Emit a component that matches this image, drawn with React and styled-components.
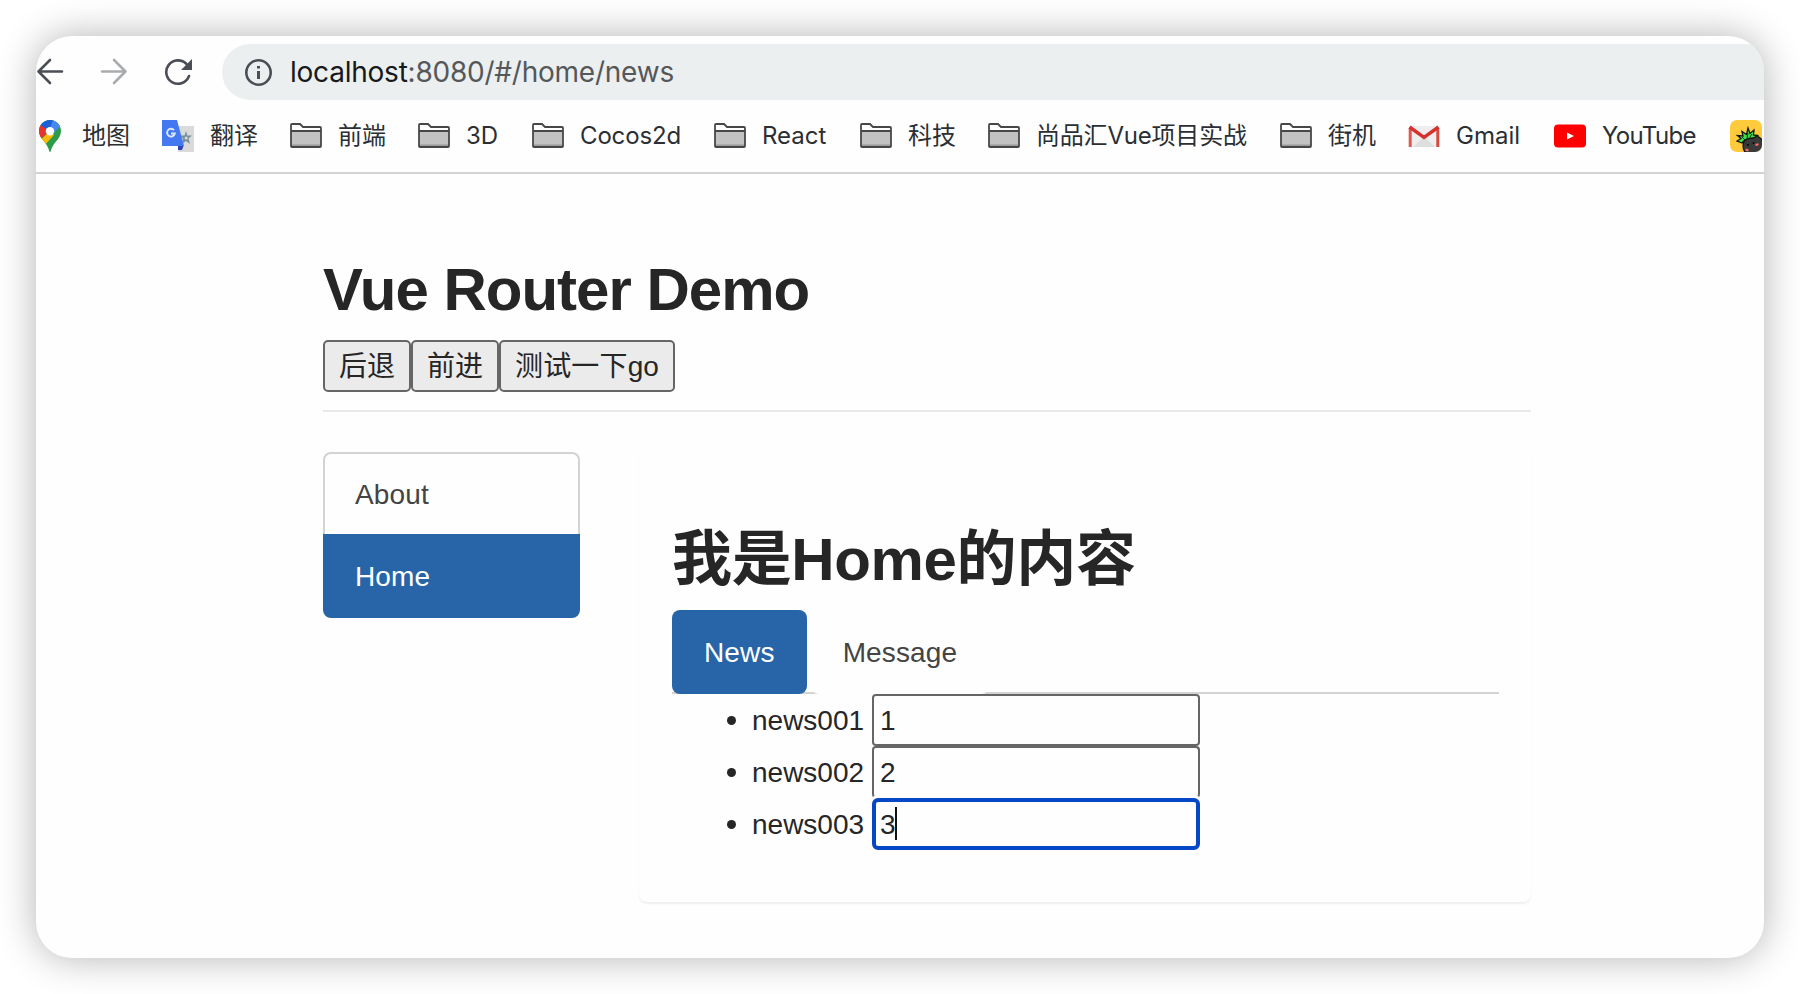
import React from "react";
import styled, { createGlobalStyle, css } from "styled-components";

const GlobalStyle = createGlobalStyle`
  *, *::before, *::after { box-sizing: border-box; }
  body {
    margin: 0;
    background: #fff;
    font-family: "Liberation Sans", "Noto Sans CJK SC", sans-serif;
    color: #262626;
  }
  h1, h2, ul { margin: 0; padding: 0; }
  ul { list-style: none; }
`;

const Stage = styled.div`
  width: 1800px;
  height: 994px;
  padding: 36px;
  overflow: hidden;
`;

const Window = styled.div`
  width: 1728px;
  height: 922px;
  border-radius: 36px;
  background: #fefefe;
  box-shadow: 0 0 38px rgba(0, 0, 0, 0.3);
`;

const Clip = styled.div`
  height: 100%;
  border-radius: inherit;
  overflow: hidden;
`;

const Toolbar = styled.div`
  display: flex;
  align-items: center;
  gap: 36px;
  height: 64px;
  padding-top: 8px;
`;

const NavIcon = styled.svg`
  flex: none;
  width: 28px;
  height: 28px;
  fill: none;
  stroke: ${(p) => (p.$muted ? "#a9acaf" : "#4b4e54")};
  stroke-width: 2.6;
  stroke-linecap: round;
  stroke-linejoin: round;
`;

const AddressBar = styled.div`
  flex: 1;
  display: flex;
  align-items: center;
  gap: 18px;
  height: 56px;
  margin-left: -6px;
  padding-left: 22px;
  border-radius: 28px 0 0 28px;
  background: #ebeff0;
`;

const Url = styled.span`
  font: 400 28px/56px Inter, sans-serif;
  letter-spacing: -0.23px;
  color: #555759;
  white-space: nowrap;
`;

const Host = styled.span`
  color: #17191b;
`;

const BookmarkBar = styled.div`
  display: flex;
  align-items: center;
  gap: 32px;
  height: 74px;
  margin-left: -2px;
  border-bottom: 2px solid #d3d3d3;
`;

const Bookmark = styled.div`
  flex: none;
  display: flex;
  align-items: center;
  gap: 16px;
`;

const BookmarkIcon = styled.svg`
  flex: none;
  display: block;
  width: 32px;
  height: 32px;
`;

const BookmarkLabel = styled.span`
  width: ${(p) => p.$width}px;
  font: 400 24px/32px Inter, "Noto Sans CJK SC", sans-serif;
  letter-spacing: ${(p) => p.$spacing || 0}px;
  color: #2b2f33;
  white-space: nowrap;
`;

const Page = styled.main`
  width: 1208px;
  margin-left: 287px;
  padding-top: 83px;
`;

const Title = styled.h2`
  font-weight: 700;
  font-size: 60px;
  line-height: 66px;
  letter-spacing: ${(p) => p.$spacing}px;
  white-space: nowrap;
`;

const Actions = styled.div`
  display: flex;
  margin-top: 17px;
  padding-bottom: 18px;
  border-bottom: 2px solid #e9e9e9;
`;

const ActionButton = styled.button`
  height: 52px;
  padding: 2px 14px 0;
  border: 2px solid #666;
  border-radius: 5px;
  background: #ebebeb;
  color: inherit;
  font: 28px/46px "Liberation Sans", "Noto Sans CJK SC", sans-serif;
  letter-spacing: ${(p) => p.$spacing || 0}px;
  white-space: nowrap;
`;

const Columns = styled.div`
  display: flex;
  align-items: flex-start;
  justify-content: space-between;
  margin-top: 40px;
`;

const Sidebar = styled.nav`
  width: 257px;
`;

const itemText = css`
  font-size: 28px;
  line-height: 40px;
  letter-spacing: 0.15px;
  color: ${(p) => (p.$active ? "#fff" : "#444")};
`;

const SideItem = styled.div`
  ${itemText}
  height: ${(p) => (p.$active ? 84 : 82)}px;
  padding: 21px 30px 19px;
  border: 2px solid ${(p) => (p.$active ? "#2865a8" : "#d3d3d3")};
  border-bottom-width: ${(p) => (p.$active ? 2 : 0)}px;
  border-radius: ${(p) => (p.$active ? "0 0 8px 8px" : "8px 8px 0 0")};
  background: ${(p) => (p.$active ? "#2865a8" : "#fefefe")};
`;

const Panel = styled.section`
  width: 892px;
  height: 450px;
  padding: 75px 32px 0 33px;
  border-radius: 8px;
  background: #fefefe;
  box-shadow: 0 2px 2px rgba(0, 0, 0, 0.06);
`;

const Tabs = styled.div`
  display: flex;
  gap: 4px;
  height: 84px;
  margin-top: 17px;
  box-shadow: inset 0 -2px #d3d3d3;
`;

const Tab = styled.div`
  ${itemText}
  height: 84px;
  padding: 23px 32px 21px;
  border-radius: 8px;
  background: ${(p) => (p.$active ? "#2865a8" : "#fefefe")};
`;

const NewsList = styled.ul`
  padding-left: 80px;
`;

const NewsItem = styled.li`
  display: flex;
  align-items: center;
  height: 52px;
  font-size: 28px;

  &::before {
    content: "";
    width: 9px;
    height: 9px;
    margin: 1px 16px 0 -25px;
    border-radius: 50%;
    background: #262626;
  }
`;

const NewsName = styled.span`
  padding-top: 2px;
  line-height: 40px;
`;

const FieldWrap = styled.span`
  position: relative;
  display: flex;
  margin-left: 8px;
`;

const Field = styled.input`
  width: 328px;
  height: 52px;
  margin: 0;
  padding: 2px ${(p) => (p.$focused ? 4 : 6)}px 0;
  border: ${(p) => (p.$focused ? "4px solid #0547c4" : "2px solid #666")};
  ${(p) => p.$openBottom && "border-bottom-color: transparent;"}
  border-radius: ${(p) => (p.$focused ? 6 : 4)}px;
  outline: none;
  background: #fefefe;
  color: #262626;
  font: 28px/40px "Liberation Sans", sans-serif;
`;

const Caret = styled.span`
  position: absolute;
  left: 23px;
  top: 9px;
  width: 2px;
  height: 33px;
  background: #111;
`;

const MapsIcon = () => (
  <BookmarkIcon viewBox="0 0 32 32">
    <defs>
      <clipPath id="pin">
        <path d="M16 0C9.500 0 5 5 5 11c0 4 2 7 5 10.500C13 25 14.500 28 15.200 31c.3 1.300 1.300 1.300 1.600 0C17.500 28 19 25 22 21.500 25 18 27 15 27 11 27 5 22.500 0 16 0z" />
      </clipPath>
    </defs>
    <g clipPath="url(#pin)">
      <rect width="32" height="32" fill="#2d9c48" />
      <path d="M3 23L16 11l4 4L9 27z" fill="#fbb80c" />
      <path d="M5 4l11 7L3 22z" fill="#e5342b" />
      <path d="M0 0h20L16 11 6 5z" fill="#1d5fd8" />
      <path d="M19 0h10v3L18 15l-3-5z" fill="#4688f1" />
    </g>
    <circle cx="16" cy="11.300" r="4.200" fill="#fff" />
  </BookmarkIcon>
);

const TranslateIcon = () => (
  <BookmarkIcon viewBox="0 0 32 32">
    <rect x="16" y="6" width="16" height="26" fill="#dadada" />
    <path d="M16 26h5.500l-1.500 4h-4z" fill="#2b46b4" />
    <path d="M24 11l1.400 4.500H30l-3.500 3 1.500 5.500-4-3-4 3 1-5.500-3-3h4.500z" fill="#78909c" />
    <circle cx="24.200" cy="18" r="1.500" fill="#dadada" />
    <path d="M0 0h15l7 26H0z" fill="#4478f0" />
    <path d="M12 10.200A3.900 3.900 0 1 0 12.800 13.500H9" stroke="#dce7ff" strokeWidth="1.900" fill="none" />
  </BookmarkIcon>
);

const FolderIcon = () => (
  <BookmarkIcon viewBox="0 0 32 32">
    <path d="M1 26V5Q1 4 2 4H10l3 3h17Q31 7 31 8V26q0 1-1 1H2q-1 0-1-1z" fill="#fefefe" />
    <path d="M1 11h30v16H1z" fill="#c2c2c2" />
    <path d="M1 24.500h30v2H1z" fill="#999" />
    <path d="M1 26V5Q1 4 2 4H10l3 3h17Q31 7 31 8V26q0 1-1 1H2q-1 0-1-1zM1 11h30" fill="none" stroke="#474747" strokeWidth="1.800" />
  </BookmarkIcon>
);

const GmailIcon = () => (
  <BookmarkIcon viewBox="0 0 32 32">
    <path d="M3 6h26v21H3z" fill="#eee" />
    <path d="M5 27l11-10 11 10z" fill="#dedede" />
    <path d="M2.200 27V8" stroke="#e2574f" strokeWidth="3" />
    <path d="M29.800 27V8" stroke="#d9483f" strokeWidth="3" />
    <path d="M1.500 7L16 17.500 30.500 7" fill="none" stroke="#d5332f" strokeWidth="3.400" />
  </BookmarkIcon>
);

const YouTubeIcon = () => (
  <BookmarkIcon viewBox="0 0 32 32">
    <rect y="4.500" width="32" height="23" rx="4" fill="#f00" />
    <path d="M13 12.500v7l7-3.500z" fill="#fff" />
  </BookmarkIcon>
);

const PineappleIcon = () => (
  <BookmarkIcon viewBox="0 0 32 32">
    <defs>
      <clipPath id="tile">
        <rect width="32" height="32" rx="7" />
      </clipPath>
    </defs>
    <g clipPath="url(#tile)">
      <rect width="32" height="32" fill="#ffcb3d" />
      <circle cx="23.500" cy="26" r="10.500" fill="#3a3a3a" stroke="#151515" strokeWidth="1.200" />
      <path
        d="M12 23l-5-2 4-2.500-3.500-3 5.500.5-1-4.500 4.500 3L18 8l2 5.500 4-3.500-.5 5 4 .5-4 2.500c-5 0-9 1.500-11.500 5z"
        fill="#3be04a"
        stroke="#151515"
        strokeWidth="1.300"
      />
      <path d="M17 18l1-5M15 20l-3-3M20 17l2-3" stroke="#151515" strokeWidth=".9" />
      <path d="M15.500 29.500l3 1M25.500 25l3-.8" stroke="#ff6f66" strokeWidth="2" />
      <circle cx="18" cy="25" r=".9" fill="#000" />
      <circle cx="23.500" cy="23" r=".9" fill="#000" />
    </g>
  </BookmarkIcon>
);

const BOOKMARKS = [
  { label: "地图", width: 48, Icon: MapsIcon },
  { label: "翻译", width: 48, Icon: TranslateIcon },
  { label: "前端", width: 48, Icon: FolderIcon },
  { label: "3D", width: 34, Icon: FolderIcon },
  { label: "Cocos2d", width: 102, spacing: -0.15, Icon: FolderIcon },
  { label: "React", width: 66, Icon: FolderIcon },
  { label: "科技", width: 48, Icon: FolderIcon },
  { label: "尚品汇Vue项目实战", width: 212, spacing: -0.2, Icon: FolderIcon },
  { label: "街机", width: 48, Icon: FolderIcon },
  { label: "Gmail", width: 66, Icon: GmailIcon },
  { label: "YouTube", width: 96, spacing: -0.65, Icon: YouTubeIcon },
];

const NEWS = [
  { name: "news001", value: "1" },
  { name: "news002", value: "2", openBottom: true },
  { name: "news003", value: "3", focused: true },
];

export default function App() {
  return (
    <Stage>
      <GlobalStyle />
      <Window>
        <Clip>
          <Toolbar>
            <NavIcon viewBox="0 0 28 28">
              <path d="M26 13.500H2.500M14 2L2.500 13.500 14 25" />
            </NavIcon>
            <NavIcon viewBox="0 0 28 28" $muted>
              <path d="M2 13.500h23.500M14 2l11.500 11.500L14 25" />
            </NavIcon>
            <NavIcon viewBox="0 0 28 28">
              <path d="M22.500 6A11.700 11.700 0 1 0 25 18" />
              <path d="M28 1v11H17z" fill="#4b4e54" stroke="none" />
            </NavIcon>
            <AddressBar>
              <NavIcon viewBox="0 0 28 28">
                <circle cx="14.500" cy="14.500" r="12.200" />
                <path d="M14.500 13v8M14.500 8v2.500" strokeWidth="3" strokeLinecap="butt" />
              </NavIcon>
              <Url>
                <Host>localhost</Host>:8080/#/home/news
              </Url>
            </AddressBar>
          </Toolbar>
          <BookmarkBar>
            {BOOKMARKS.map(({ label, width, spacing, Icon }) => (
              <Bookmark key={label}>
                <Icon />
                <BookmarkLabel $width={width} $spacing={spacing}>
                  {label}
                </BookmarkLabel>
              </Bookmark>
            ))}
            <PineappleIcon />
          </BookmarkBar>
          <Page>
            <Title $spacing={-1}>Vue Router Demo</Title>
            <Actions>
              <ActionButton>后退</ActionButton>
              <ActionButton>前进</ActionButton>
              <ActionButton $spacing={0.15}>测试一下go</ActionButton>
            </Actions>
            <Columns>
              <Sidebar>
                <SideItem>About</SideItem>
                <SideItem $active>Home</SideItem>
              </Sidebar>
              <Panel>
                <Title $spacing={-0.35}>我是Home的内容</Title>
                <Tabs>
                  <Tab $active>News</Tab>
                  <Tab>Message</Tab>
                </Tabs>
                <NewsList>
                  {NEWS.map(({ name, value, focused, openBottom }) => (
                    <NewsItem key={name}>
                      <NewsName>{name}</NewsName>
                      <FieldWrap>
                        <Field defaultValue={value} $focused={focused} $openBottom={openBottom} />
                        {focused && <Caret />}
                      </FieldWrap>
                    </NewsItem>
                  ))}
                </NewsList>
              </Panel>
            </Columns>
          </Page>
        </Clip>
      </Window>
    </Stage>
  );
}
